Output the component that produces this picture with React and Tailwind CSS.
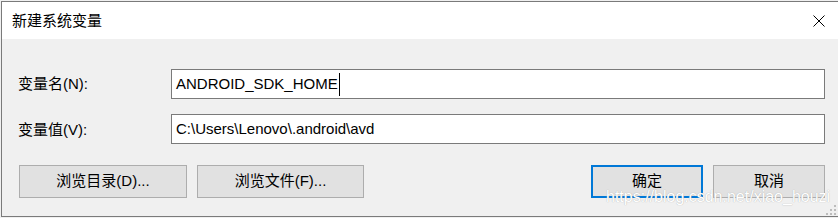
import React from "react";

const font = { fontFamily: '"Liberation Sans","Noto Sans CJK SC",sans-serif' };

function Btn({ children, primary, className = "" }) {
  return (
    <div
      className={
        "flex h-[33px] items-center justify-center bg-[#e1e1e1] text-[15px] text-black " +
        (primary ? "border-2 border-[#0078d7] " : "border border-[#adadad] ") +
        className
      }
    >
      {children}
    </div>
  );
}

export default function App() {
  return (
    <div className="relative h-[218px] w-[838px] overflow-hidden bg-[#f0f0f0] pl-px pt-px" style={font}>
      <div className="flex h-[216px] flex-col border-l border-t border-b border-[#7a7a7a]">
        {/* title bar */}
        <div className="flex h-[37px] shrink-0 items-center justify-between bg-white pl-[10px] pr-[13px]">
          <span className="text-[15px] leading-none text-black">新建系统变量</span>
          <svg width="12" height="12" viewBox="0 0 12 12" className="mt-[1px]">
            <path d="M0.5 0.5L11.5 11.5M11.5 0.5L0.5 11.5" stroke="#000" strokeWidth="1" />
          </svg>
        </div>
        {/* body */}
        <div className="flex flex-1 flex-col bg-[#f0f0f0] pl-[16px] pr-[13px] pt-[30px]">
          <div className="flex h-[30px] items-center">
            <span className="w-[153px] text-[15px] text-black">变量名(N):</span>
            <div className="flex h-[30px] flex-1 items-center border border-[#7a7a7a] bg-white pl-[4px] text-[15px] text-black">
              <span>ANDROID_SDK_HOME</span>
              <span className="ml-px h-[23px] w-px bg-black" />
            </div>
          </div>
          <div className="mt-[15px] flex h-[30px] items-center">
            <span className="w-[153px] pt-[3px] text-[15px] text-black">变量值(V):</span>
            <div className="flex h-[30px] flex-1 items-center border border-[#7a7a7a] bg-white pl-[4px] text-[15px] text-black">
              C:\Users\Lenovo\.android\avd
            </div>
          </div>
          <div className="mt-[21px] flex items-center pl-px">
            <Btn className="w-[168px]">浏览目录(D)...</Btn>
            <Btn className="ml-[10px] w-[167px]">浏览文件(F)...</Btn>
            <div className="flex-1" />
            <Btn primary className="w-[112px]">确定</Btn>
            <Btn className="ml-[10px] w-[112px]">取消</Btn>
          </div>
        </div>
      </div>
      {/* watermark */}
      <div className="pointer-events-none absolute left-[606px] top-[189px] whitespace-nowrap text-[16px] leading-none text-white [text-shadow:0_0_1px_#a0a0a0]" style={{ fontFamily: '"Liberation Sans",sans-serif' }}>
        https://blog.csdn.net/xiao_houzi
      </div>
      {/* resize grip */}
      <svg className="absolute left-[826px] top-[205px]" width="10" height="10" viewBox="0 0 10 10">
        <rect x="8" y="0" width="2" height="2" fill="#bcbcbc" />
        <rect x="4" y="4" width="2" height="2" fill="#bcbcbc" />
        <rect x="8" y="4" width="2" height="2" fill="#bcbcbc" />
        <rect x="0" y="8" width="2" height="2" fill="#bcbcbc" />
        <rect x="4" y="8" width="2" height="2" fill="#bcbcbc" />
        <rect x="8" y="8" width="2" height="2" fill="#bcbcbc" />
      </svg>
    </div>
  );
}
